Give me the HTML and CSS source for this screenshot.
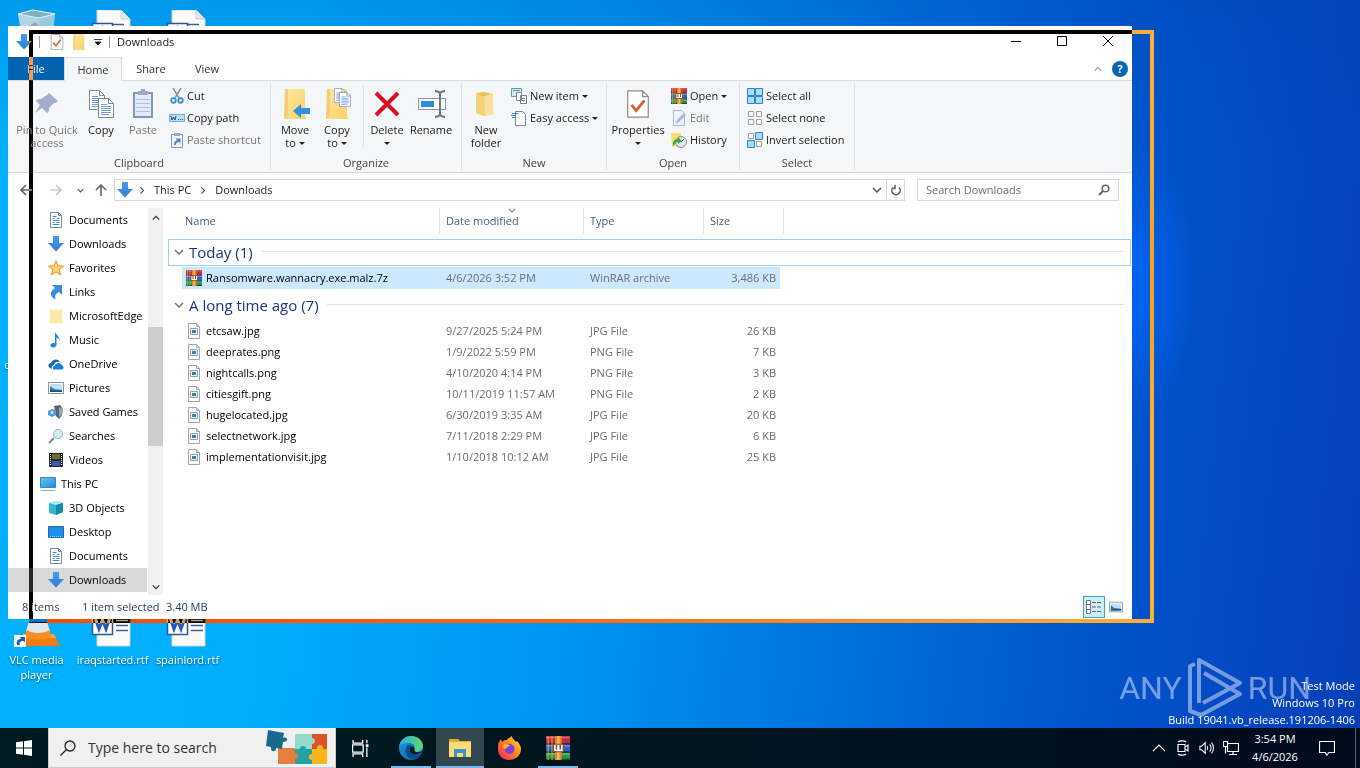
FILE: index.html
```html
<!DOCTYPE html>
<html lang="en">
<head>
<meta charset="utf-8">
<title>Downloads</title>
<link rel="stylesheet" href="styles.css">
</head>
<body>
<svg class="defs" aria-hidden="true">
  <defs>
    <linearGradient id="gBlue" x1="0" y1="0" x2="0" y2="1"><stop offset="0" stop-color="#4a9be8"/><stop offset="1" stop-color="#2a80d4"/></linearGradient>
    <linearGradient id="gFold" x1="0" y1="0" x2="1" y2="1"><stop offset="0" stop-color="#ffe9a2"/><stop offset="1" stop-color="#f7d068"/></linearGradient>
    <linearGradient id="gEdge" x1="0" y1="0" x2="1" y2="1"><stop offset="0" stop-color="#1b9de2"/><stop offset="1" stop-color="#0c59a4"/></linearGradient>
    <linearGradient id="gEdge2" x1="0" y1="0" x2="1" y2="0"><stop offset="0" stop-color="#2aa9e0"/><stop offset="1" stop-color="#5fdc6c"/></linearGradient>
    <linearGradient id="gFox" x1="1" y1="0" x2="0" y2="1"><stop offset="0" stop-color="#ffe23d"/><stop offset=".45" stop-color="#ff8a1c"/><stop offset="1" stop-color="#f0186c"/></linearGradient>
    <linearGradient id="gScr" x1="0" y1="0" x2="1" y2="1"><stop offset="0" stop-color="#6cc4f8"/><stop offset="1" stop-color="#1a88dc"/></linearGradient>
    <symbol id="down" viewBox="0 0 16 16"><path d="M5 0h6v7h5l-8 8.500L0 7h5z" fill="url(#gBlue)"/></symbol>
    <symbol id="docs" viewBox="0 0 16 16"><path d="M2.500.5h8l3 3v12h-11z" fill="#fff" stroke="#7f8a94"/><path d="M10.500.5v3h3" fill="none" stroke="#7f8a94"/><path d="M4.500 4.500h4M4.500 6.500h2m2 0h3M4.500 8.500h7M4.500 10.500h2m2 0h3M4.500 12.500h7" stroke="#3c8ec4"/></symbol>
    <symbol id="star" viewBox="0 0 16 16"><path d="M8 .8l2 5 5.500.3-4.200 3.500 1.400 5.400L8 12l-4.700 3 1.400-5.400L.5 6.100 6 5.800z" fill="#ffd36b" stroke="#e0922f"/></symbol>
    <symbol id="link" viewBox="0 0 16 16"><path d="M4 1h10v10l-3-3c-4 2-4 4-3.500 7.500C2 13 1 8 7 4z" fill="#3a8edb"/></symbol>
    <symbol id="folder" viewBox="0 0 16 16"><path d="M2 1h12v10l1 4.500H1.500z" fill="#fdeaa8"/><path d="M2 1h12v2H2z" fill="#fff1bd"/></symbol>
    <symbol id="music" viewBox="0 0 16 16"><path d="M7 0c1 3 5 4 4.500 9-1-3-2-3.500-3-3.500V13c0 3-6 3.500-6 .5 0-2 2.500-3 4.500-2z" fill="#1c8adb"/></symbol>
    <symbol id="cloud" viewBox="0 0 16 16"><path d="M2 12C-.5 11 0 7 3 7c1-4 7-5 9-1-3-1-6 1-6 3-2 .5-3 2-2 4z" fill="#0f6cbd"/><path d="M6 13.500c-2-1-1-4 1-4 1-3.500 6-3.500 7 0 2 .5 2 3.500 0 4z" fill="#1a7fd4"/></symbol>
    <symbol id="pic" viewBox="0 0 16 16"><path d="M.5 2.500h15v11H.5z" fill="#fff" stroke="#8a949c"/><path d="M2 4h12v8H2z" fill="#bfe0f7"/><path d="M2 12V6l4 3 8 1v2z" fill="#2d7aa8"/><path d="M2 10.500h12V12H2z" fill="#205070"/></symbol>
    <symbol id="games" viewBox="0 0 16 16"><path d="M6 2l6-1 3 4-1 6-3 4-3-3z" fill="#59646c"/><path d="M11 3l4 2-1 5-3 3z" fill="#9ba5ab"/><path d="M0 7l4-2 4 1v5l-4 2-4-2z" fill="#4d9bd8"/><circle cx="4" cy="8.500" r="1.500" fill="#d3e8f6"/></symbol>
    <symbol id="find" viewBox="0 0 16 16"><path d="M1 15l5-5" stroke="#7d8790" stroke-width="2"/><circle cx="10" cy="6" r="4.500" fill="#d5effc" stroke="#8faebd"/></symbol>
    <symbol id="video" viewBox="0 0 16 16"><path d="M1 1h14v14H1z" fill="#272b31"/><path d="M4 2h8v5H4z" fill="#6f6c2e"/><path d="M4 9h8v5H4z" fill="#355cb5"/><path d="M2.500 2v12M13.500 2v12" stroke="#fff" stroke-dasharray="1 1"/></symbol>
    <symbol id="pc" viewBox="0 0 16 16"><path d="M.5 1.500h15v10H.5z" fill="url(#gScr)" stroke="#3a87b8"/><path d="M1 14.500h14" stroke="#8ab4cc"/></symbol>
    <symbol id="cube" viewBox="0 0 16 16"><path d="M1 3l8-2 6 2v9l-7 3-7-2z" fill="#2fb9cf"/><path d="M1 3l8-2 6 2-7 2z" fill="#a6ecf2"/><path d="M8 5l7-2v9l-7 3z" fill="#138aa8"/></symbol>
    <symbol id="desk" viewBox="0 0 16 16"><path d="M.5 2.500h15v11H.5z" fill="#1d8eea" stroke="#1670b8"/><path d="M2 12.500h12" stroke="#9ad3fb" stroke-dasharray="1 1"/></symbol>
    <symbol id="rar" viewBox="0 0 16 16"><path d="M0 0h16v5H0z" fill="#c42a3e"/><path d="M0 5.500h16v5H0z" fill="#2f5fc8"/><path d="M0 11h16v5H0z" fill="#229a4c"/><path d="M0 1h16M0 6.500h16M0 12h16" stroke="#fff" stroke-opacity=".3"/><path d="M0 5.200h16M0 10.700h16M0 15.500h16" stroke="#2c2630" stroke-width=".8"/><path d="M1 0h1v16H1zM3.500 0h1v16h-1z" fill="#e2b23c" opacity=".6"/><path d="M6 0h4.500v16H6z" fill="#e8822e"/><path d="M7.500 0h1.500v16H7.500z" fill="#f7bd58"/><path d="M5 5.500h6.500v5H5z" fill="#fff" stroke="#7a4520" stroke-width=".8"/><path d="M7 6v3M9.500 6v3" stroke="#8f4820"/></symbol>
    <symbol id="img" viewBox="0 0 16 16"><path d="M2.500.5h8l3 3v12h-11z" fill="#fff" stroke="#a3a6a8"/><path d="M10.500.5v3h3" fill="none" stroke="#a3a6a8"/><path d="M4.500 5.500h7v6h-7z" fill="#eef5fa" stroke="#86a3b8"/><path d="M6 7h4v3H6z" fill="#3e7fa9"/></symbol>
    <symbol id="check" viewBox="0 0 24 30"><path d="M1 1h16l6 6v22H1z" fill="#fff" stroke="#8e8e8e" stroke-width="1.300"/><path d="M17 1v6h6" fill="none" stroke="#8e8e8e" stroke-width="1.300"/><path d="M5 16l5 6 9-11" fill="none" stroke="#d9622b" stroke-width="3"/></symbol>
    <symbol id="bigFolder" viewBox="0 0 24 30"><path d="M2 0h20v25l1 5H1z" fill="url(#gFold)"/><path d="M2 0h3v28l-4 2z" fill="#f2cf74"/></symbol>
    <symbol id="page" viewBox="0 0 16 20"><path d="M.5.5h10l5 5v14H.5z" fill="#fff" stroke="#7e8a96"/><path d="M10.500.5v5h5" fill="none" stroke="#7e8a96"/><path d="M3 6.500h6M3 8.500h10M3 10.500h10M3 12.500h10M3 14.500h10M3 16.500h8" stroke="#6c9be0"/></symbol>
    <symbol id="chev" viewBox="0 0 10 6"><path d="M1 1l4 4 4-4" fill="none" stroke="currentColor" stroke-width="1.500"/></symbol>
    <symbol id="word" viewBox="0 0 40 48"><path d="M6 0h24l9 9v36H6z" fill="#fbfbfb" stroke="#d0d4d8"/><path d="M30 0v9h9" fill="#e5e8eb" stroke="#c8ccd0"/><path d="M11 14.500h22M25 19.500h12M25 24.500h12M25 29.500h12" stroke="#3d5f92" stroke-width="1.500"/><path d="M1.500 13.500h20v20h-20z" fill="#fff" stroke="#2b5797" stroke-width="1.500"/><path d="M4.500 18l3.500 10 3.500-9 3.500 9 3.500-10" fill="none" stroke="#2359b8" stroke-width="3"/></symbol>
  </defs>
</svg>

<main class="desktop">
  <a class="shortcut bin" href="#"><svg viewBox="0 0 48 48"><path d="M5 5l15-4 22 4-4 40H12z" fill="#a9cfdc" opacity=".9"/><path d="M5 5l15-4 22 4-16 4z" fill="#7fb0c2" stroke="#e8f5fa"/><path d="M5 5l21 4 1 36H12z" fill="#c3dde6" opacity=".6"/><path d="M16 17l6-4 5 5-2 6z" fill="#8fa7b0"/></svg></a>
  <a class="shortcut file-a" href="#"><svg viewBox="0 0 48 48"><use href="#word" x="2" width="40" height="48"/></svg></a>
  <a class="shortcut file-b" href="#"><svg viewBox="0 0 48 48"><use href="#word" x="2" width="40" height="48"/></svg></a>
  <a class="shortcut peek" href="#">c</a>
  <a class="shortcut vlc" href="#"><svg viewBox="0 0 48 48"><path d="M10 33h31l6 12H5z" fill="#f07d12"/><path d="M10 33h31l2 4H8z" fill="#ffa53c"/><path d="M21 2h8l9 33c-2 5-24 5-26 0z" fill="#f38b1e"/><path d="M18 12h14l1 4H17z" fill="#f4f4f4"/><path d="M16 21h18l3 9c-3 4-21 4-24 0z" fill="#e3e6e7"/><path d="M14 29c4 4 18 4 22 0l2 6c-3 4-23 4-26 0z" fill="#f98f24"/><path d="M1 34h12v12H1z" fill="#fff"/><path d="M4 44c-1-4 1-6 4-6l-1-2h5v5l-2-1c-3 0-4 2-3 4z" fill="#1d5fae"/></svg>VLC media player</a>
  <a class="shortcut doc-a" href="#"><svg viewBox="0 0 48 48"><use href="#word" x="2" width="40" height="48"/></svg>iraqstarted.rtf</a>
  <a class="shortcut doc-b" href="#"><svg viewBox="0 0 48 48"><use href="#word" x="2" width="40" height="48"/></svg>spainlord.rtf</a>

  <section class="window" aria-label="Downloads">
    <header class="titlebar">
      <svg class="i16"><use href="#down"/></svg><i class="bar"></i>
      <svg class="i16 gap"><use href="#check"/></svg>
      <svg class="i16"><use href="#bigFolder"/></svg>
      <svg class="qat" viewBox="0 0 8 8"><path d="M0 1.500h8M1 4h6L4 7z" fill="#111" stroke="#111" stroke-width=".8"/></svg><i class="bar"></i>
      <h1>Downloads</h1>
      <button class="cap" aria-label="Minimize"><svg viewBox="0 0 12 12"><path d="M1 6.500h10"/></svg></button>
      <button class="cap" aria-label="Maximize"><svg viewBox="0 0 12 12"><path d="M1.500 1.500h9v9h-9z"/></svg></button>
      <button class="cap" aria-label="Close"><svg viewBox="0 0 12 12"><path d="M1 1l10 10M11 1L1 11"/></svg></button>
    </header>
    <nav class="tabs">
      <button class="file">File</button><button class="on">Home</button><button>Share</button><button>View</button>
      <span class="right"><svg class="chev up"><use href="#chev"/></svg><button class="help" aria-label="Help">?</button></span>
    </nav>
    <div class="ribbon">
      <section class="grp g1">
        <div class="tools">
          <button class="big w78 off"><svg viewBox="0 0 32 32"><path d="M18 5l9 8-2 2h-2l-5 5c0 3 0 4-2 5l-5-5-7 5 5-8-4-4c1-2 3-2 5-2l6-4z" fill="#a0b0cb"/></svg>Pin to Quick access</button>
          <button class="big w30"><svg viewBox="0 0 32 32"><use href="#page" x="4" y="2" width="16" height="20"/><use href="#page" x="13" y="10" width="16" height="20"/></svg>Copy</button>
          <button class="big w54 off"><svg viewBox="0 0 32 32"><path d="M7 5h18v24H7z" fill="#e4ebf8" stroke="#8296be" stroke-width="2"/><path d="M11 3h3V1h4v2h3v4H11z" fill="#9aa9c6"/><path d="M9 11.500h14M9 15.500h14M9 19.500h14M9 23.500h14" stroke="#b2c2e0"/></svg>Paste</button>
          <div class="small">
            <button><svg viewBox="0 0 16 16"><path d="M4 0l6 10M12 0L6 10" stroke="#8b959e" stroke-width="1.500"/><circle cx="4.500" cy="12.500" r="2.300" fill="none" stroke="#2b8cd0" stroke-width="1.700"/><circle cx="11.500" cy="12.500" r="2.300" fill="none" stroke="#2b8cd0" stroke-width="1.700"/></svg>Cut</button>
            <button><svg viewBox="0 0 16 16"><path d="M.5 4.500h15v7H.5z" fill="#b9def6" stroke="#6aaedc"/><path d="M2 6l1 4 1.500-3L6 10l1-4M9 9.500h1m1 0h1m1 0h1" fill="none" stroke="#1d4f7a"/></svg>Copy path</button>
            <button class="off"><svg viewBox="0 0 16 16"><path d="M2.500 2.500h11v13h-11z" fill="#edf2fb" stroke="#8296be"/><path d="M5 1h6v3H5z" fill="#9aa9c6"/><path d="M5 13c0-3 1-4 3-5L6.500 6.500h5v5L10 10c-2 0-3 1-3 3z" fill="#5a84bd"/></svg>Paste shortcut</button>
          </div>
        </div>
        <h2>Clipboard</h2>
      </section>
      <section class="grp g2">
        <div class="tools">
          <button class="big w42"><svg viewBox="0 0 32 32"><use href="#bigFolder" x="4" y="1" width="24" height="30"/><path d="M14 23l8-7v4h9v6h-9v4z" fill="#338fe0"/></svg>Move<span>to <b></b></span></button>
          <button class="big w42"><svg viewBox="0 0 32 32"><use href="#bigFolder" x="4" y="1" width="24" height="30"/><use href="#page" x="13" y="0" width="12" height="15"/><use href="#page" x="18" y="4" width="12" height="15"/></svg>Copy<span>to <b></b></span></button>
          <i class="sep"></i>
          <button class="big w44"><svg viewBox="0 0 32 32"><path d="M5 5l22 22M27 5L5 27" stroke="#d51324" stroke-width="4"/></svg>Delete<span><b></b></span></button>
          <button class="big w44"><svg viewBox="0 0 32 32"><path d="M3.500 10.500h27v11h-27z" fill="#fff" stroke="#7e9ab4"/><path d="M6 13h13v6H6z" fill="#2e8ade"/><path d="M20 3c3 0 4 1 5 2 1-1 2-2 5-2M20 29c3 0 4-1 5-2 1 1 2 2 5 2M25 4v24" fill="none" stroke="#6b7680" stroke-width="2"/></svg>Rename</button>
        </div>
        <h2>Organize</h2>
      </section>
      <section class="grp g3">
        <div class="tools">
          <button class="big w44"><svg viewBox="0 0 32 32"><path d="M6 5l8-1 9 2v20l-9 2-8-3z" fill="#e9bf5a"/><path d="M13 9l10-4v15l1 6-9 2z" fill="#fae09a"/><path d="M6 5l8 4 1 19-9-3z" fill="#f6d27a"/></svg>New<br>folder</button>
          <div class="small">
            <button><svg viewBox="0 0 16 16"><path d="M.5.5h10v8H.5z" fill="#d6ecf6" stroke="#5b9ab0"/><path d="M2 2.500h7" stroke="#5b9ab0"/><path d="M5.500 4.500h5v8h-5zM9.500 7.500h6v8h-6z" fill="#fff" stroke="#7a858c"/><path d="M11 10.500h3M11 12.500h3" stroke="#7a858c"/></svg>New item <b></b></button>
            <button><svg viewBox="0 0 16 16"><path d="M4.500 1.500h7l3 3v11h-10z" fill="#fff" stroke="#7a858c"/><path d="M1 3.500h6M0 5.500h5M1 7.500h3" stroke="#2b87d8"/></svg>Easy access <b></b></button>
          </div>
        </div>
        <h2>New</h2>
      </section>
      <section class="grp g4">
        <div class="tools">
          <button class="big w60"><svg viewBox="0 0 32 32"><use href="#check" x="4" y="2" width="24" height="28"/></svg>Properties<span><b></b></span></button>
          <div class="small">
            <button><svg><use href="#rar"/></svg>Open <b></b></button>
            <button class="off"><svg viewBox="0 0 16 16"><path d="M2.500.5h8l3 3v12h-11z" fill="#edf2fb" stroke="#a9b8d8"/><path d="M5 14l1-4 7-7 2 2-7 7z" fill="#a8b7d4"/></svg>Edit</button>
            <button><svg viewBox="0 0 16 16"><path d="M0 1h10v13l-9 1z" fill="#fbdc74"/><circle cx="10" cy="10" r="5.500" fill="#e2e6e8" stroke="#8a9298"/><path d="M10 10l3-3" stroke="#666"/><path d="M2 14c-1-5 2-7 5-7V5l4 4-4 3v-2c-2 0-3 2-5 4z" fill="#3ba843"/></svg>History</button>
          </div>
        </div>
        <h2>Open</h2>
      </section>
      <section class="grp g5">
        <div class="tools">
          <div class="small">
            <button><svg viewBox="0 0 16 16"><path d="M.5.5h7v7h-7zM8.500.5h7v7h-7zM.5 8.500h7v7h-7zM8.500 8.500h7v7h-7z" fill="#a9dcfa" stroke="#2986c4"/></svg>Select all</button>
            <button><svg viewBox="0 0 16 16"><path d="M1.500 1.500h5v5h-5zM9.500 1.500h5v5h-5zM1.500 9.500h5v5h-5zM9.500 9.500h5v5h-5z" fill="#fff" stroke="#a0a0a0"/></svg>Select none</button>
            <button><svg viewBox="0 0 16 16"><path d="M1.500 1.500h5v5h-5zM9.500 9.500h5v5h-5z" fill="#fff" stroke="#a0a0a0"/><path d="M8.500.5h7v7h-7zM.5 8.500h7v7h-7z" fill="#a9dcfa" stroke="#2986c4"/></svg>Invert selection</button>
          </div>
        </div>
        <h2>Select</h2>
      </section>
    </div>

    <div class="address">
      <button class="ar back" aria-label="Back"><svg viewBox="0 0 12 12"><path d="M6 1L1 6l5 5M1 6h11"/></svg></button>
      <button class="ar dim" aria-label="Forward"><svg viewBox="0 0 12 12"><path d="M6 1l5 5-5 5M11 6H0"/></svg></button>
      <button class="ar mini" aria-label="Recent"><svg class="chev"><use href="#chev"/></svg></button>
      <button class="ar up-one" aria-label="Up"><svg viewBox="0 0 12 12"><path d="M1 6l5-5 5 5M6 1v11"/></svg></button>
      <div class="crumbs">
        <svg class="i16"><use href="#down"/></svg><svg class="chev side"><use href="#chev"/></svg><a href="#">This PC</a><svg class="chev side"><use href="#chev"/></svg><a href="#">Downloads</a>
        <button class="drop" aria-label="History"><svg class="chev"><use href="#chev"/></svg></button>
        <button class="fresh" aria-label="Refresh"><svg viewBox="0 0 12 12"><path d="M3 3.500a4.200 4.200 0 1 0 6 0M5 .8v3.700H1.500" fill="none" stroke="#666" stroke-width="1.600"/></svg></button>
      </div>
      <label class="search"><input type="text" placeholder="Search Downloads" aria-label="Search Downloads"><svg viewBox="0 0 12 12"><circle cx="7.500" cy="4.500" r="3.300" fill="none" stroke="#666" stroke-width="1.500"/><path d="M5 7l-4 4" stroke="#666" stroke-width="2"/></svg></label>
    </div>

    <div class="body">
      <nav class="tree">
        <a href="#"><svg><use href="#docs"/></svg>Documents</a>
        <a href="#"><svg><use href="#down"/></svg>Downloads</a>
        <a href="#"><svg><use href="#star"/></svg>Favorites</a>
        <a href="#"><svg><use href="#link"/></svg>Links</a>
        <a href="#"><svg><use href="#folder"/></svg>MicrosoftEdge</a>
        <a href="#"><svg><use href="#music"/></svg>Music</a>
        <a href="#"><svg><use href="#cloud"/></svg>OneDrive</a>
        <a href="#"><svg><use href="#pic"/></svg>Pictures</a>
        <a href="#"><svg><use href="#games"/></svg>Saved Games</a>
        <a href="#"><svg><use href="#find"/></svg>Searches</a>
        <a href="#"><svg><use href="#video"/></svg>Videos</a>
        <a href="#" class="root"><svg><use href="#pc"/></svg>This PC</a>
        <a href="#"><svg><use href="#cube"/></svg>3D Objects</a>
        <a href="#"><svg><use href="#desk"/></svg>Desktop</a>
        <a href="#"><svg><use href="#docs"/></svg>Documents</a>
        <a href="#" class="sel"><svg><use href="#down"/></svg>Downloads</a>
      </nav>
      <div class="scroll"><svg class="chev up"><use href="#chev"/></svg><i class="before"></i><i class="thumb"></i><i class="after"></i><svg class="chev"><use href="#chev"/></svg></div>
      <div class="list">
        <table>
          <colgroup><col class="c0"><col class="c1"><col class="c2"><col class="c3"><col class="c4"><col class="c5"><col></colgroup>
          <thead><tr><th></th><th><span class="first">Name</span></th><th><span class="sorted">Date modified<svg class="chev"><use href="#chev"/></svg></span></th><th><span>Type</span></th><th colspan="2"><span class="last">Size</span></th><th></th></tr></thead>
          <tbody>
            <tr class="group focus"><th colspan="7"><div><svg class="chev"><use href="#chev"/></svg>Today (1)<hr></div></th></tr>
            <tr class="picked"><td></td><td><div class="name"><svg><use href="#rar"/></svg>Ransomware.wannacry.exe.malz.7z</div></td><td>4/6/2026 3:52 PM</td><td>WinRAR archive</td><td>3,486 KB</td><td></td><td></td></tr>
            <tr class="group second"><th colspan="7"><div><svg class="chev"><use href="#chev"/></svg>A long time ago (7)<hr></div></th></tr>
            <tr><td></td><td><div class="name"><svg><use href="#img"/></svg>etcsaw.jpg</div></td><td>9/27/2025 5:24 PM</td><td>JPG File</td><td>26 KB</td><td></td><td></td></tr>
            <tr><td></td><td><div class="name"><svg><use href="#img"/></svg>deeprates.png</div></td><td>1/9/2022 5:59 PM</td><td>PNG File</td><td>7 KB</td><td></td><td></td></tr>
            <tr><td></td><td><div class="name"><svg><use href="#img"/></svg>nightcalls.png</div></td><td>4/10/2020 4:14 PM</td><td>PNG File</td><td>3 KB</td><td></td><td></td></tr>
            <tr><td></td><td><div class="name"><svg><use href="#img"/></svg>citiesgift.png</div></td><td>10/11/2019 11:57 AM</td><td>PNG File</td><td>2 KB</td><td></td><td></td></tr>
            <tr><td></td><td><div class="name"><svg><use href="#img"/></svg>hugelocated.jpg</div></td><td>6/30/2019 3:35 AM</td><td>JPG File</td><td>20 KB</td><td></td><td></td></tr>
            <tr><td></td><td><div class="name"><svg><use href="#img"/></svg>selectnetwork.jpg</div></td><td>7/11/2018 2:29 PM</td><td>JPG File</td><td>6 KB</td><td></td><td></td></tr>
            <tr><td></td><td><div class="name"><svg><use href="#img"/></svg>implementationvisit.jpg</div></td><td>1/10/2018 10:12 AM</td><td>JPG File</td><td>25 KB</td><td></td><td></td></tr>
          </tbody>
        </table>
      </div>
    </div>
    <footer class="status"><span class="items">8 items</span><span class="count">1 item selected</span><span>3.40 MB</span>
      <button class="view on" aria-label="Details"><svg viewBox="0 0 16 16"><path d="M.5 1.500h4v13h-4z" fill="#fff" stroke="#777"/><path d="M1 5.500h3M1 10.500h3M6 3.500h4m1 0h4M6 8h4m1 0h4M6 12.500h4m1 0h4" stroke="#667"/></svg></button>
      <button class="view" aria-label="Thumbnails"><svg viewBox="0 0 16 16"><use href="#pic"/></svg></button>
    </footer>
  </section>
  <div class="outline"></div>

  <div class="mark" aria-hidden="true"><span>ANY</span><svg viewBox="0 0 56 62"><path d="M8 7L3 9v45l11 4 39-21-36-21M12 46V3l41 23-37 20" fill="none" stroke="#fff" stroke-width="4" stroke-linejoin="round"/></svg><span>RUN</span></div>
  <div class="build">Test Mode<br>Windows 10 Pro<br>Build 19041.vb_release.191206-1406</div>
</main>

<footer class="taskbar">
  <button class="start" aria-label="Start"><svg viewBox="0 0 16 16"><path d="M0 2.300l7-1v6.200H0zM8 1.200L16 0v7.500H8zM0 8.500h7v6.200l-7-1zM8 8.500h8V16l-8-1.200z" fill="#fff"/></svg></button>
  <label class="tsearch"><svg viewBox="0 0 16 16"><circle cx="10" cy="6" r="5" fill="none" stroke="#222" stroke-width="1.300"/><path d="M6.500 9.500L.5 15.500" stroke="#222" stroke-width="1.300"/></svg><input type="text" placeholder="Type here to search" aria-label="Type here to search">
    <svg class="puzzle" viewBox="0 0 64 36"><path d="M13 18h17v16H13z" fill="#e67e3c"/><path d="M30 4h17v15H30z" fill="#94d9cc"/><path d="M47 4h15v15H47z" fill="#dd5126"/><path d="M30 19h17v15H30z" fill="#25a3a4"/><path d="M47 19h15v15H47z" fill="#fbb41c"/><circle cx="47" cy="11" r="3" fill="#94d9cc"/><circle cx="30" cy="26" r="3" fill="#e67e3c"/><circle cx="38" cy="19" r="3" fill="#25a3a4"/><circle cx="47" cy="27" r="3" fill="#fbb41c"/><circle cx="55" cy="18" r="3" fill="#fbb41c"/><path d="M3 0l16 3-1 5c5-2 6 4 0 4l-1 7-6-1c0 5-6 4-5-1l-5-1z" fill="#176a8c"/></svg></label>
  <button class="task" aria-label="Task view"><svg class="t16" viewBox="0 0 16 16"><path d="M1 0v3h9V0M1 16v-3h9v3M.5 4.500h10v7H.5zM14 0v3M14 7v9" fill="none" stroke="#fff" stroke-width="1.200"/><path d="M13 4h2.500v2.500H13z" fill="#fff"/></svg></button>
  <button class="task run edge" aria-label="Edge"><svg viewBox="0 0 24 24"><circle cx="12" cy="12" r="12" fill="url(#gEdge)"/><path d="M0 11C1 3 8 0 12 0c8 0 12 6 12 10s-4 6-7 6c-3 0-3-2-2-3 2-4-2-6-5-6-5 0-9 2-10 4z" fill="url(#gEdge2)"/><path d="M9 9c-5 5-2 13 4 14 4 0 7-2 9-5-4 2-9 1-11-2-1-2-1-5 1-7z" fill="#0a4b8c"/><path d="M15.500 12c-2-3-5-2-5 1 0 2 1 4 3 5 4 1 8 0 10-3-3 2-8 2-8-1z" fill="#0b1a28"/></svg></button>
  <button class="task run wide" aria-label="File Explorer"><svg viewBox="0 0 24 24"><path d="M1 3h9l2 2h11v16H1z" fill="#e9a832"/><path d="M1 6h22v15H1z" fill="#fcdc78"/><path d="M6 21v-8h12v8h-3v-4H9v4z" fill="#3f8fcb"/></svg></button>
  <button class="task" aria-label="Firefox"><svg viewBox="0 0 24 24"><path d="M2 6l2-3 1 3c2-2 4-2 5-2 1-2 4-3 5-4 0 3 2 3 4 6l1-1c3 3 4 6 4 8 0 7-6 11-12 11S1 20 1 13c0-3 0-5 1-7z" fill="url(#gFox)"/><circle cx="12.500" cy="13" r="5" fill="#7b3fe0"/><path d="M6 9c2-2 5 0 7 0-1 2-4 2-4 4-3 0-4-2-3-4z" fill="#ffb02e"/></svg></button>
  <button class="task run" aria-label="WinRAR"><svg viewBox="0 0 16 16"><use href="#rar"/></svg></button>
  <div class="tray">
    <svg viewBox="0 0 16 16"><path d="M2 11l6-6 6 6"/></svg>
    <svg viewBox="0 0 16 16"><path d="M3 4.500h7v7H3zM10 7l3-2v6l-3-2M3 2c2-1.500 6-1.500 8 0M3 14c2 1.500 6 1.500 8 0"/></svg>
    <svg viewBox="0 0 18 16"><path d="M1 6h2l4-4v12l-4-4H1zM9 6c1 1 1 3 0 4M12 4c2 2 2 6 0 8M14 2c3 3 3 9 0 12"/></svg>
    <svg viewBox="0 0 16 16"><path d="M4.500 3.500h11v8h-11zM10 11.500v3M6 14.500h8M.5 1.500h4v5h-4zM2.500 6.500v7"/></svg>
    <time>3:54 PM<br>4/6/2026</time>
    <svg class="note" viewBox="0 0 16 16"><path d="M.5 1.500h15v11H10L8 15l-2-2.500H.5z"/></svg>
    <i></i>
  </div>
</footer>
</body>
</html>
```
FILE: styles.css
```css
* { box-sizing: border-box; }
body {
  margin: 0; height: 100vh; display: flex; flex-direction: column; overflow: hidden;
  font: 11px/14px "Open Sans", "Noto Sans", sans-serif; color: #1a1a1a;
}
button { font: inherit; color: inherit; background: none; border: 0; padding: 0; }
a { color: inherit; text-decoration: none; }
h1, h2 { margin: 0; font: inherit; }
svg { flex: none; display: block; }
.defs { position: absolute; width: 0; height: 0; }
.i16 { width: 16px; height: 16px; }
.chev { width: 10px; height: 6px; color: #555; }
.chev.up { transform: rotate(180deg); }
.chev.side { width: 8px; height: 5px; transform: rotate(-90deg); }

.desktop {
  position: relative; flex: 1; isolation: isolate;
  background:
    radial-gradient(ellipse 70px 140px at 1128px 285px, rgba(0, 105, 255, .85), rgba(0, 100, 255, 0)),
    linear-gradient(to bottom, rgba(0, 60, 160, .2), rgba(0, 60, 160, 0) 22%),
    linear-gradient(96deg, #00b2ff 0%, #00aefd 22%, #0094f2 45%, #0074df 62%, #0056cc 80%, #044ac4 90%, #053fb8 100%);
}
.shortcut {
  position: absolute; width: 75px; display: flex; flex-direction: column; align-items: center;
  text-align: center; color: #fff; line-height: 15px; text-shadow: 0 1px 2px rgba(0, 0, 0, .6);
}
.shortcut svg { width: 48px; height: 48px; margin-bottom: 3px; }
.bin { left: -1px; top: 9px; }
.file-a { left: 75px; top: 10px; }
.file-b { left: 150px; top: 10px; }
.peek { left: 2px; top: 357px; width: 10px; }
.vlc { left: -1px; top: 601px; padding: 0 6px; }
.doc-a { left: 75px; top: 601px; }
.doc-b { left: 150px; top: 601px; }

.window {
  position: absolute; left: 8px; right: 228px; top: 26px; bottom: 109px;
  display: flex; flex-direction: column; background: #fff;
}
.outline {
  position: absolute; left: 29px; right: 206px; top: 30px; bottom: 105px;
  border: 4px solid #fff; mix-blend-mode: difference; pointer-events: none;
}
.titlebar { display: flex; align-items: center; height: 31px; padding: 0 1px 0 8px; }
.titlebar .bar { width: 1px; height: 12px; background: #999; margin: 0 7px; }
.titlebar .gap { margin: 0 6px 0 2px; }
.titlebar .qat { width: 8px; height: 8px; margin-left: 7px; }
.titlebar h1 { flex: 1; }
.cap { width: 46px; height: 29px; margin-bottom: 2px; display: flex; align-items: center; justify-content: center; }
.cap svg { width: 12px; height: 12px; fill: none; stroke: #000; }

.tabs { display: flex; height: 24px; border-bottom: 1px solid #dadbdc; }
.tabs > button { height: 24px; width: 58px; color: #333; }
.tabs > button:nth-of-type(4) { width: 54px; }
.tabs .file { background: #0063b1; color: #fff; width: 56px; height: 23px; }
.tabs .on { background: #f5f6f7; border: 1px solid #dadbdc; border-bottom: 0; }
.tabs .right { margin-left: auto; display: flex; align-items: center; gap: 10px; padding-right: 4px; }
.tabs .right .chev { color: #999; width: 8px; }
.help { width: 16px; height: 16px; border-radius: 50%; background: #0a64b4; color: #fff; font-weight: 700; }

.ribbon { display: flex; height: 92px; background: #f5f6f7; border-bottom: 1px solid #d5d6d7; color: #222; }
.grp { display: flex; flex-direction: column; justify-content: space-between; padding: 2px 0 0; margin: 2px 0; border-right: 1px solid #dfe0e1; }
.g1 { width: 263px; }
.g2 { width: 191px; }
.g3 { width: 145px; }
.g4 { width: 133px; }
.g5 { width: 115px; }
.grp h2 { text-align: center; color: #444; line-height: 14px; }
.tools { display: flex; align-items: flex-start; }
.g2 .tools { padding-left: 3px; }
.g3 .tools { padding-left: 2px; }
.g4 .tools { padding-left: 1px; }
.g5 .tools { padding-left: 7px; }
.big { display: flex; flex-direction: column; align-items: center; line-height: 13px; color: #222; }
.big svg { width: 32px; height: 32px; margin: 3px 0; }
.big span { white-space: nowrap; }
.w78 { width: 78px; padding: 0 6px; }
.w60 { width: 60px; }
.w54 { width: 54px; }
.w44 { width: 44px; }
.w42 { width: 42px; }
.w30 { width: 30px; }
.small { display: flex; flex-direction: column; }
.g4 .small, .g3 .small { padding-left: 3px; }
.small button { height: 22px; display: flex; align-items: center; gap: 3px; text-align: left; white-space: nowrap; }
.small svg { width: 16px; height: 16px; }
.g1 .small button { gap: 2px; }
.g1 .small svg { margin-left: -1px; }
.ribbon .off { color: #777; }
.ribbon b { display: inline-block; border: 3px solid transparent; border-top-color: #222; border-bottom: 0; vertical-align: 2px; }
.sep { width: 1px; height: 62px; background: #dfe0e1; margin: 0 1px 0 5px; }

.address { display: flex; align-items: center; height: 34px; padding: 0 13px 0 6px; }
.ar { width: 24px; height: 22px; display: flex; align-items: center; justify-content: center; }
.ar svg:not(.chev) { width: 12px; height: 12px; fill: none; stroke: #666; stroke-width: 1.6; }
.ar.back { margin-right: 6px; }
.ar.dim svg:not(.chev) { stroke: #ccc; }
.ar.mini .chev { width: 7px; height: 5px; }
.ar.up-one { width: 18px; margin-right: 4px; }
.crumbs { flex: 1; height: 22px; display: flex; align-items: center; gap: 4px; border: 1px solid #d9d9d9; padding-left: 2px; margin-right: 12px; }
.crumbs .side { margin: 0 1px; }
.crumbs a { padding: 0 3px; }
.drop { margin-left: auto; }
.fresh { width: 18px; height: 20px; border-left: 1px solid #d9d9d9; display: flex; align-items: center; justify-content: center; }
.fresh svg { width: 12px; height: 12px; }
.search { width: 202px; height: 22px; display: flex; align-items: center; border: 1px solid #d9d9d9; padding: 0 8px; }
.search input { flex: 1; min-width: 0; border: 0; padding: 0; font: inherit; outline: 0; }
.search input::placeholder { color: #6d6d6d; opacity: 1; }
.search svg { width: 12px; height: 12px; }

.body { flex: 1; min-height: 0; display: flex; padding-top: 1px; }
.tree { width: 139px; overflow: hidden; color: #000; }
.tree a { display: flex; align-items: center; gap: 5px; height: 24px; padding-left: 40px; white-space: nowrap; }
.tree .root { padding-left: 32px; }
.tree .sel { background: #d9d9d9; }
.tree svg { width: 16px; height: 16px; }
.scroll { width: 15px; margin-left: 1px; background: #f0f0f0; display: flex; flex-direction: column; align-items: center; padding: 7px 0 5px; }
.scroll .chev { width: 8px; color: #333; }
.scroll .before { flex: 105; }
.scroll .thumb { flex: 119; width: 15px; background: #cdcdcd; }
.scroll .after { flex: 137; }
.list { flex: 1; padding: 0 1px 0 5px; }
table { width: 100%; table-layout: fixed; border-collapse: collapse; }
th { font-weight: 400; text-align: left; padding: 0; }
td { padding: 0 0 0 6px; height: 21px; color: #6d6d6d; white-space: nowrap; }
.c0 { width: 14px; } .c1 { width: 258px; } .c2 { width: 144px; } .c3 { width: 120px; } .c4 { width: 76px; } .c5 { width: 4px; }
thead tr { height: 31px; vertical-align: top; }
thead span { display: flex; align-items: center; position: relative; height: 26px; padding-left: 6px; border-right: 1px solid #e5e5e5; color: #4c607a; }
thead .first { padding-left: 3px; }
.sorted .chev { position: absolute; left: 68px; top: 0; width: 8px; height: 5px; color: #888; }
td:nth-child(1), td:nth-child(6), td:nth-child(7) { padding: 0; }
td:nth-child(2) { color: #000; padding-left: 4px; }
td:nth-child(5) { text-align: right; padding-right: 4px; }
.name { display: flex; align-items: center; gap: 4px; }
.name svg { width: 16px; height: 16px; }
.picked td { height: 22px; }
.picked td:nth-child(n+2):nth-child(-n+5) { background: #cce8ff; }
.group div { display: flex; align-items: center; gap: 5px; height: 27px; padding: 0 6px 2px 5px; font-size: 15px; color: #1e3287; border: 1px solid transparent; margin-bottom: 1px; }
.group.focus div { border-color: #99d1ff; }
.group.second div { height: 31px; margin: 0; padding-bottom: 0; }
.group .chev { color: #777; }
.group hr { flex: 1; border: 0; border-top: 1px solid #e2e2e2; margin: 0 0 0 3px; }
.status { height: 24px; display: flex; align-items: center; padding: 0 5px 0 14px; color: #1e395b; }
.status .items { width: 60px; }
.status .count { width: 84px; }
.status .view { width: 22px; height: 22px; display: flex; align-items: center; justify-content: center; }
.status .view:nth-of-type(1) { margin-left: auto; }
.view.on { background: #cdeef9; border: 1px solid #3fa0c4; }
.view svg { width: 16px; height: 16px; }
.view:not(.on) svg { width: 14px; height: 14px; }

.mark { position: absolute; right: 49px; bottom: 9px; display: flex; align-items: center; gap: 5px; opacity: .45; color: #fff; font: 32px/60px "Roboto", sans-serif; }
.mark svg { width: 56px; height: 62px; }
.build { position: absolute; right: 5px; bottom: 0; text-align: right; color: #fff; line-height: 17px; }

.taskbar { height: 40px; display: flex; background: linear-gradient(90deg, #001a22, #00161f 45%, #010b1e); color: #fff; }
.start { width: 48px; display: flex; align-items: center; justify-content: center; }
.start svg { width: 16px; height: 16px; }
.tsearch { width: 288px; display: flex; align-items: center; background: #f0f0f0; border: 1px solid #ccc; border-top: 0; padding: 0 6px 0 11px; gap: 12px; }
.tsearch > svg:first-child { width: 16px; height: 16px; }
.tsearch input { flex: 1; min-width: 0; border: 0; padding: 0; background: none; font: 14px/20px "Open Sans", sans-serif; }
.tsearch input::placeholder { color: #333; opacity: 1; }
.tsearch .puzzle { width: 64px; height: 36px; }
.task { width: 48px; height: 40px; margin-right: 1px; display: flex; align-items: center; justify-content: center; position: relative; }
.task svg { width: 24px; height: 24px; }
.task .t16 { width: 17px; height: 17px; }
.task.edge { margin-left: 2px; }
.task.run::after { content: ""; position: absolute; left: 4px; right: 4px; bottom: 0; height: 2px; background: #76b9ed; }
.task.wide { background: #33474f; }
.task.wide::after { left: 0; right: 0; }
.tray { margin-left: auto; display: flex; align-items: center; gap: 8px; }
.tray svg { width: 16px; height: 16px; fill: none; stroke: #fff; stroke-width: 1.2; }
.tray time { width: 56px; margin: 0 6px 0 0; text-align: center; line-height: 18px; }
.tray .note { margin: 0 12px 0 2px; }
.tray i { width: 1px; height: 40px; background: #566; margin-right: 4px; }
```
